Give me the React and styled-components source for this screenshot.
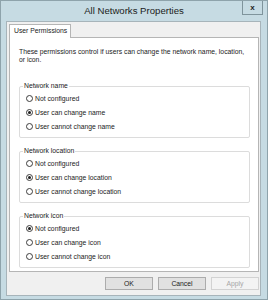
import React from 'react';
import styled, { createGlobalStyle } from 'styled-components';

const Global = createGlobalStyle`
  html, body { margin: 0; padding: 0; background: #ffffff; }
  body { font-family: "Liberation Sans", Arial, sans-serif; }
`;

const Window = styled.div`
  box-sizing: border-box;
  width: 268px;
  height: 300px;
  border: 1px solid #8ea3ab;
  background: #c6dbe3;
  display: flex;
  flex-direction: column;
`;

const TitleBar = styled.div`
  height: 20px;
  flex: none;
  display: grid;
  grid-template-columns: 1fr auto 1fr;
  align-items: start;
`;

const Title = styled.div`
  grid-column: 2;
  font-size: 9.6px;
  line-height: 20px;
  color: #1b1b1b;
  white-space: nowrap;
`;

const CloseButton = styled.div`
  grid-column: 3;
  justify-self: end;
  margin-right: 4px;
  box-sizing: border-box;
  width: 21px;
  height: 14px;
  border: 1px solid #7f949c;
  border-top: none;
  display: flex;
  align-items: center;
  justify-content: center;
  font-size: 8px;
  font-weight: bold;
  color: #1e1e1e;
  line-height: 1;
`;

const Client = styled.div`
  box-sizing: border-box;
  margin: 0 6px 3px 5px;
  height: 275px;
  border: 1px solid #a7b4ba;
  background: #f0f0f0;
  padding: 2px 1px 5px 2px;
  display: flex;
  flex-direction: column;
`;

const Tab = styled.div`
  align-self: flex-start;
  position: relative;
  z-index: 1;
  box-sizing: border-box;
  width: 62px;
  height: 14px;
  margin-bottom: -1px;
  border: 1px solid #b5b5b5;
  border-bottom: none;
  background: #ffffff;
  padding-left: 4px;
  font-size: 6.8px;
  line-height: 12px;
  color: #1b1b1b;
  white-space: nowrap;
`;

const Panel = styled.div`
  box-sizing: border-box;
  height: 235px;
  border: 1px solid #b5b5b5;
  background: #ffffff;
  padding: 10px 8px 3px 9px;
  display: flex;
  flex-direction: column;
`;

const Description = styled.p`
  margin: 0 0 22px 0;
  font-size: 6.8px;
  line-height: 8px;
  color: #1b1b1b;
  white-space: nowrap;
`;

const Group = styled.div`
  position: relative;
  box-sizing: border-box;
  height: 52px;
  border: 1px solid #dcdcdc;
  border-radius: 2px;
  padding: 4px 0 4px 6px;
  display: flex;
  flex-direction: column;
  & + & { margin-top: 13px; }
`;

const Legend = styled.span`
  position: absolute;
  top: -5px;
  left: 3px;
  padding: 0 1px;
  background: #ffffff;
  font-size: 6.8px;
  line-height: 8px;
  color: #1b1b1b;
  white-space: nowrap;
`;

const Option = styled.label`
  height: 14px;
  display: flex;
  align-items: center;
  gap: 2px;
  font-size: 6.8px;
  color: #1b1b1b;
  white-space: nowrap;
`;

const Radio = styled.span`
  box-sizing: border-box;
  width: 7px;
  height: 7px;
  flex: none;
  border: 1px solid #3d3d3d;
  border-radius: 50%;
  background: #ffffff;
  display: flex;
  align-items: center;
  justify-content: center;
  &::after {
    content: "";
    display: ${(p) => (p.$checked ? 'block' : 'none')};
    width: 3px;
    height: 3px;
    border-radius: 50%;
    background: #1e1e1e;
  }
`;

const ButtonRow = styled.div`
  margin-top: 5px;
  display: flex;
  justify-content: flex-end;
  gap: 5px;
`;

const Button = styled.div`
  box-sizing: border-box;
  width: 48px;
  height: 13px;
  border: 1px solid ${(p) => (p.$disabled ? '#d2d2d2' : '#acacac')};
  background: ${(p) => (p.$disabled ? '#f3f3f3' : '#e1e1e1')};
  color: ${(p) => (p.$disabled ? '#a6a6a6' : '#1b1b1b')};
  font-size: 6.8px;
  line-height: 11px;
  text-align: center;
`;

const groups = [
  {
    title: 'Network name',
    options: ['Not configured', 'User can change name', 'User cannot change name'],
    checked: 1,
  },
  {
    title: 'Network location',
    options: ['Not configured', 'User can change location', 'User cannot change location'],
    checked: 1,
  },
  {
    title: 'Network icon',
    options: ['Not configured', 'User can change icon', 'User cannot change icon'],
    checked: 0,
  },
];

export default function App() {
  return (
    <>
      <Global />
      <Window>
        <TitleBar>
          <Title>All Networks Properties</Title>
          <CloseButton>x</CloseButton>
        </TitleBar>
        <Client>
          <Tab>User Permissions</Tab>
          <Panel>
            <Description>
              These permissions control if users can change the network name, location,
              <br />
              or icon.
            </Description>
            {groups.map((g) => (
              <Group key={g.title}>
                <Legend>{g.title}</Legend>
                {g.options.map((o, i) => (
                  <Option key={o}>
                    <Radio $checked={i === g.checked} />
                    {o}
                  </Option>
                ))}
              </Group>
            ))}
          </Panel>
          <ButtonRow>
            <Button>OK</Button>
            <Button>Cancel</Button>
            <Button $disabled>Apply</Button>
          </ButtonRow>
        </Client>
      </Window>
    </>
  );
}
